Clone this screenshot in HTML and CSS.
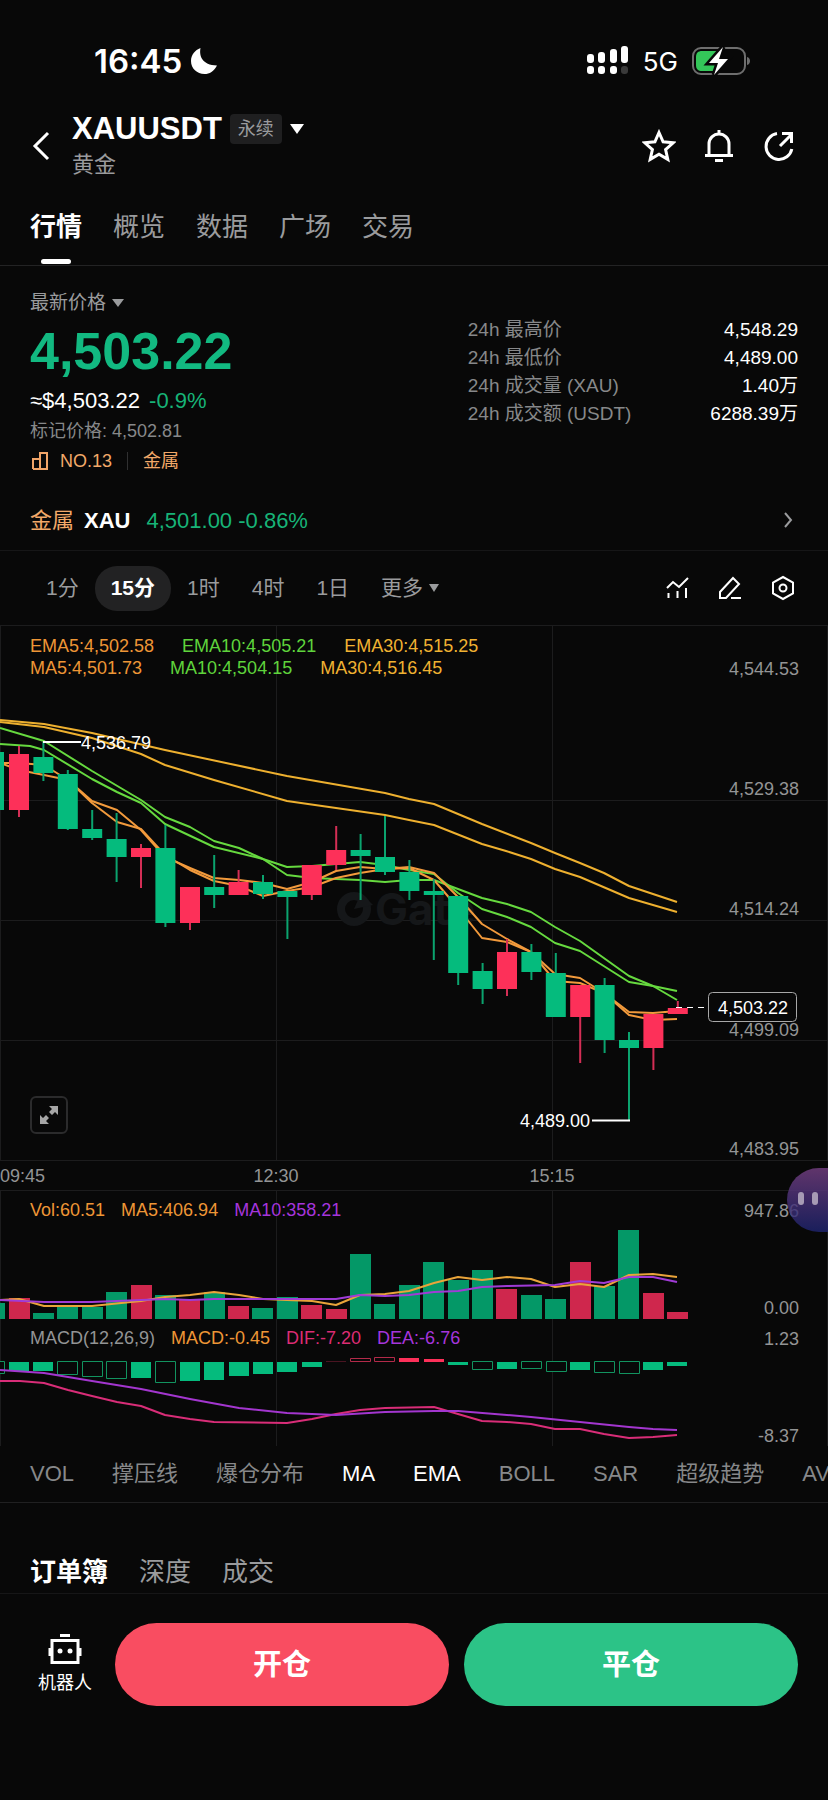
FILE: index.html
```html
<!DOCTYPE html>
<html lang="zh-CN">
<head>
  <meta charset="UTF-8" />
  <meta name="viewport" content="width=device-width, initial-scale=1.0"/>
  <title>XAUUSDT 永续</title>
  <link rel="stylesheet" href="styles.css">
</head>
<body>

  <div class="status-bar">
    <div class="clock">
      <span>16:45</span>
      <svg width="28" height="28" viewBox="0 0 28 28"><path d="M10.500 1C9 9 12 18 27 18.500C24 24.500 19.500 27 14.500 27C7 27 1 21.500 1 14C1 8 5 3 10.500 1Z" fill="#fff"/></svg>
    </div>
    <div class="signals">
      <svg width="42" height="30" viewBox="0 0 42 30" fill="#fff">
        <rect x="0" y="8" width="7" height="9" rx="3"/><rect x="11" y="6" width="7" height="11" rx="3"/>
        <rect x="23" y="3" width="7" height="14" rx="3"/><rect x="34" y="0" width="7" height="17" rx="3"/>
        <rect x="0" y="20" width="7" height="8" rx="3"/><rect x="11" y="20" width="7" height="8" rx="3"/>
        <rect x="23" y="20" width="7" height="8" rx="3"/><rect x="34" y="20" width="7" height="8" rx="3" fill="#3a3a3a"/>
      </svg>
      <span>5G</span>
      <svg width="60" height="30" viewBox="0 0 60 30">
        <rect x="1" y="2" width="52" height="26" rx="8" fill="none" stroke="#6e6e6e" stroke-width="2"/>
        <path d="M55 11v8c4-1 4-7 0-8z" fill="#6e6e6e"/>
        <path d="M10 5h17v20H10c-4 0-6-2-6-6v-8c0-4 2-6 6-6z" fill="#34c759"/>
        <path d="M31 1L17 17h9l-4 12 14-16h-9z" fill="#fff" stroke="#080808" stroke-width="5" paint-order="stroke"/>
      </svg>
    </div>
  </div>

  <header class="header">
    <button class="icon-btn back" aria-label="返回">
      <svg width="22" height="30" viewBox="0 0 22 30"><path d="M18 2L5 15l13 13" class="stroke"/></svg>
    </button>
    <div class="pair">
      <div class="pair-row">
        <h1>XAUUSDT</h1>
        <span class="badge">永续</span>
        <svg width="14" height="10" viewBox="0 0 14 10"><path d="M0 0h14L7 10z" fill="#fff"/></svg>
      </div>
      <div class="pair-sub">黄金</div>
    </div>
    <div class="actions">
      <button class="icon-btn" aria-label="收藏">
        <svg width="34" height="34" viewBox="0 0 34 34"><path d="M17 3.500l4.100 9.300 10.100 1-7.600 6.700 2.200 9.900-8.800-5.100-8.800 5.100 2.200-9.900-7.600-6.700 10.100-1z" class="stroke"/></svg>
      </button>
      <button class="icon-btn" aria-label="提醒">
        <svg width="34" height="34" viewBox="0 0 34 34"><path d="M17 1v4M7 26V15a10 10 0 0 1 20 0v11M3 26.500h28M13 31.500h8" class="stroke"/></svg>
      </button>
      <button class="icon-btn" aria-label="分享">
        <svg width="34" height="34" viewBox="0 0 34 34"><path d="M15 4.600A13 13 0 1 0 29.800 20M18 17L29 6M20 4.500h9.500V14" class="stroke"/></svg>
      </button>
    </div>
  </header>

  <nav class="tabs">
    <a href="#" class="active">行情</a>
    <a href="#">概览</a>
    <a href="#">数据</a>
    <a href="#">广场</a>
    <a href="#">交易</a>
  </nav>

  <section class="summary">
    <div class="quote">
      <button class="price-type">最新价格 <svg width="12" height="8" viewBox="0 0 12 8"><path d="M0 0h12L6 8z" fill="#9a9b9d"/></svg></button>
      <div class="price">4,503.22</div>
      <div class="fiat">≈$4,503.22 <span class="green">-0.9%</span></div>
      <div class="mark">标记价格: 4,502.81</div>
      <div class="tags">
        <svg width="20" height="20" viewBox="0 0 20 20"><path d="M3 18V8h7M10 18V2h7v16H3" fill="none" stroke="#f0a468" stroke-width="2"/></svg>
        <span>NO.13</span><i class="sep"></i><span>金属</span>
      </div>
    </div>
    <dl class="stats">
      <div><dt>24h 最高价</dt><dd>4,548.29</dd></div>
      <div><dt>24h 最低价</dt><dd>4,489.00</dd></div>
      <div><dt>24h 成交量 (XAU)</dt><dd>1.40万</dd></div>
      <div><dt>24h 成交额 (USDT)</dt><dd>6288.39万</dd></div>
    </dl>
  </section>

  <a href="#" class="index-row">
    <span class="orange">金属</span>
    <span class="sym">XAU</span>
    <span class="green">4,501.00 -0.86%</span>
    <svg width="10" height="16" viewBox="0 0 10 16"><path d="M2 1l6 7-6 7" fill="none" stroke="#9a9b9d" stroke-width="2"/></svg>
  </a>

  <div class="toolbar">
    <div class="frames">
      <button>1分</button>
      <button class="active">15分</button>
      <button>1时</button>
      <button>4时</button>
      <button>1日</button>
      <button>更多 <svg width="10" height="8" viewBox="0 0 10 8"><path d="M0 0h10L5 8z" fill="#9a9b9d"/></svg></button>
    </div>
    <div class="tools">
      <button class="icon-btn" aria-label="指标">
        <svg width="24" height="24" viewBox="0 0 24 24"><path d="M2 12l6-6 6 5L23 2M3.500 17v5M12.500 15v7M21 12v10" class="stroke thin"/></svg>
      </button>
      <button class="icon-btn" aria-label="画线">
        <svg width="24" height="24" viewBox="0 0 24 24"><path d="M2 22v-6L15 2l6 6L8 22zM13 22h10" class="stroke thin"/></svg>
      </button>
      <button class="icon-btn" aria-label="设置">
        <svg width="24" height="26" viewBox="0 0 24 26"><path d="M12 2l10 5.500v11L12 24 2 18.500v-11z" class="stroke thin"/><circle cx="12" cy="13" r="3.500" class="stroke thin"/></svg>
      </button>
    </div>
  </div>

  <section class="chart">
    <div class="pane">
      <!-- candles: 24.4 wide slots, 20 wide bodies -->
      <svg viewBox="0 625 828 565">
        <path class="grid" d="M0 625.500H828M0 800.500H828M0 920.500H828M0 1040.500H828M0 1160.500H828M.5 625V1160M276.500 625V1160M552.500 625V1160M827.500 625V1160"/>
        <g class="watermark">
          <circle cx="354" cy="909" r="13"/>
          <path d="M354 909l7-16 12 12z"/>
          <text x="375" y="925">Gate</text>
        </g>
        <g class="line">
          <polyline stroke="#eeb02f" points="0,720 44,724 92,733 165,750 287,776 385,793 409,799 434,804 482,824 531,843 555,853 580,863 604,873 629,886 653,894 677,902"/>
          <polyline stroke="#eeb02f" points="0,722 44,727 92,738 141,754 165,765 214,780 287,801 336,808 385,815 409,820 434,825 482,844 506,851 531,859 555,869 580,877 629,898 677,912"/>
          <polyline stroke="#66d93f" points="0,728 44,741 92,771 141,800 165,817 190,827 214,841 239,848 263,859 287,867 312,866 336,864 360,862 385,865 409,870 434,874 458,893 482,909 507,917 531,927 555,943 580,951 629,982 653,986 677,991"/>
          <polyline stroke="#66d93f" points="0,744 30,746 44,750 92,779 117,792 141,803 165,824 214,847 263,859 287,875 312,878 360,880 385,882 409,880 434,880 482,898 507,904 531,912 555,927 580,941 629,976 653,986 677,1000"/>
          <polyline stroke="#f29a3c" points="0,763 19,763 44,765 68,780 92,801 117,810 141,830 165,857 190,868 214,878 239,880 263,883 287,889 312,882 336,871 360,867 385,869 409,867 434,873 458,897 482,924 507,939 531,952 555,974 580,978 604,993 629,1012 653,1013 677,1011"/>
          <polyline stroke="#f29a3c" points="0,763 19,770 44,775 68,780 92,803 117,822 141,829 165,855 190,870 214,881 239,886 263,896 287,891 312,887 336,878 360,873 385,869 409,868 434,880 458,908 482,938 507,942 531,952 555,981 580,983 604,993 629,1015 653,1020 677,1019"/>
        </g>
        <path class="wick up" d="M19 746V817M141 844V888M190 887V930M238.600 870V895M311.800 865V900M336.200 826V870M507 939V996M580.200 985V1063M653.400 1014V1070M677.800 1001V1014"/>
        <path class="wick down" d="M43.400 742V781M67.800 770V830M92.200 810V840M116.600 813V882M165.400 825V927M214.200 855V908M263 875V899M287.400 891V939M360.600 834V900M385 816V875M409.400 860V900M433.800 879V960M458.200 896V985M482.600 963V1004M531.400 944V980M555.800 953V1017M604.600 978V1053M629 1032V1121"/>
        <path class="up-fill" d="M9 754h20v56h-20zM131 848h20v9h-20zM180 887h20v36h-20zM228.600 882h20v13h-20zM301.800 865h20v30h-20zM326.200 850h20v15h-20zM497 952h20v37h-20zM570.200 985h20v32h-20zM643.400 1014h20v34h-20zM667.800 1008h20v6h-20z"/>
        <path class="down-fill" d="M-16 752h20v58h-20zM33.400 757h20v16h-20zM57.800 774h20v55h-20zM82.200 829h20v9h-20zM106.600 839h20v18h-20zM155.400 848h20v75h-20zM204.200 887h20v8h-20zM253 882h20v12h-20zM277.400 891h20v6h-20zM350.600 850h20v6h-20zM375 857h20v15h-20zM399.400 872h20v19h-20zM423.800 891h20v4h-20zM448.200 896h20v77h-20zM472.600 971h20v18h-20zM521.400 952h20v20h-20zM545.800 973h20v44h-20zM594.600 985h20v55h-20zM619 1040h20v8h-20z"/>
        <path class="marker" d="M43 742H81M592 1120.500H630"/>
        <path class="marker dash" d="M676 1007.500H704"/>
        <text class="mark-text" x="81" y="749">4,536.79</text>
        <text class="mark-text" x="520" y="1127">4,489.00</text>
        <g class="axis" text-anchor="end">
          <text x="799" y="675">4,544.53</text>
          <text x="799" y="795">4,529.38</text>
          <text x="799" y="915">4,514.24</text>
          <text x="799" y="1036">4,499.09</text>
          <text x="799" y="1155">4,483.95</text>
        </g>
        <rect x="708.500" y="992.500" width="88" height="29" rx="4" fill="#080808" stroke="#a8a8a8"/>
        <text class="mark-text" x="753" y="1014" text-anchor="middle">4,503.22</text>
        <g class="axis">
          <text x="0" y="1182">09:45</text>
          <text x="276" y="1182" text-anchor="middle">12:30</text>
          <text x="552" y="1182" text-anchor="middle">15:15</text>
        </g>
      </svg>
      <div class="legend ma">
        <div><span class="c-orange">EMA5:4,502.58</span><span class="c-green">EMA10:4,505.21</span><span class="c-yellow">EMA30:4,515.25</span></div>
        <div><span class="c-orange">MA5:4,501.73</span><span class="c-green">MA10:4,504.15</span><span class="c-yellow">MA30:4,516.45</span></div>
      </div>
      <button class="expand" aria-label="全屏">
        <svg width="18" height="18" viewBox="0 0 18 18" fill="#a6a6a6"><path d="M9 0h9v9l-3-3-3 3-3-3 3-3zM0 9l3 3 3-3 3 3-3 3 3 3H0z"/></svg>
      </button>
    </div>

    <div class="pane">
      <svg viewBox="0 1190 828 130">
        <path class="grid" d="M0 1190.500H828M.5 1190V1320M276.500 1190V1320M552.500 1190V1320M827.500 1190V1320"/>
        <path fill="#cf274d" d="M9 1298h21v21h-21zM131 1285h21v34h-21zM179 1299h21v20h-21zM228 1306h21v13h-21zM301 1305h21v14h-21zM326 1309h21v10h-21zM496 1289h21v30h-21zM570 1262h21v57h-21zM643 1293h21v26h-21zM667 1312h21v7h-21z"/>
        <path fill="#049867" d="M-16 1303h21v16h-21zM33 1313h21v6h-21zM57 1307h21v12h-21zM82 1307h21v12h-21zM106 1292h21v27h-21zM155 1295h21v24h-21zM204 1292h21v27h-21zM252 1308h21v11h-21zM277 1297h21v22h-21zM350 1254h21v65h-21zM374 1304h21v15h-21zM399 1285h21v34h-21zM423 1262h21v57h-21zM448 1280h21v39h-21zM472 1270h21v49h-21zM521 1295h21v24h-21zM545 1299h21v20h-21zM594 1286h21v33h-21zM618 1230h21v89h-21z"/>
        <g class="line">
          <polyline stroke="#e9a43a" points="0,1300 19,1299 44,1306 92,1306 141,1301 165,1297 190,1295 214,1292 239,1295 263,1299 287,1300 312,1301 336,1305 360,1295 385,1294 409,1291 434,1283 458,1277 482,1280 507,1277 531,1279 555,1287 580,1284 604,1287 629,1275 653,1274 677,1277"/>
          <polyline stroke="#a03bd6" points="0,1300 44,1302 92,1302 141,1300 165,1299 190,1300 214,1299 263,1299 336,1299 360,1295 385,1296 409,1295 434,1292 458,1291 482,1287 507,1286 555,1285 580,1281 604,1283 629,1277 653,1277 677,1282"/>
        </g>
        <g class="axis" text-anchor="end">
          <text x="799" y="1217">947.86</text>
          <text x="799" y="1314">0.00</text>
        </g>
      </svg>
      <div class="legend vol"><span class="c-orange">Vol:60.51</span><span class="c-orange">MA5:406.94</span><span class="c-purple">MA10:358.21</span></div>
      <button class="assistant" aria-label="助手"><i></i><i></i></button>
    </div>

    <div class="pane">
      <svg viewBox="0 1320 828 126">
        <path class="grid" d="M.5 1320V1446M276.500 1320V1446M552.500 1320V1446M827.500 1320V1446"/>
        <path class="down-fill" d="M9 1362h20v9h-20zM33 1362h20v9h-20zM131 1362h20v16h-20zM180 1362h20v19h-20zM204 1362h20v18h-20zM229 1362h20v14h-20zM253 1362h20v12h-20zM277 1362h20v10h-20zM302 1362h20v5h-20zM448 1362h20v3h-20zM497 1362h20v7h-20zM570 1362h20v8h-20zM643 1362h20v8h-20zM667 1362h20v4h-20z"/>
        <path class="hollow" stroke="#12935f" d="M-15.500 1361.500h20v12h-20zM57.500 1361.500h20v13h-20zM82.500 1361.500h20v15h-20zM106.500 1361.500h20v17h-20zM155.500 1361.500h20v21h-20zM472.500 1361.500h20v8h-20zM521.500 1361.500h20v7h-20zM546.500 1361.500h20v10h-20zM594.500 1361.500h20v11h-20zM619.500 1361.500h20v12h-20z"/>
        <path class="up-fill" d="M399 1358h20v4h-20zM424 1359h20v3h-20z"/>
        <path class="hollow" stroke="#b32a49" d="M350.500 1358.500h20v3h-20zM374.500 1357.500h20v4h-20z"/>
        <path class="hollow" stroke="#4a1421" d="M326 1361.500h20"/>
        <g class="line">
          <polyline stroke="#d92d78" points="0,1381 20,1381 44,1383 68,1390 92,1396 117,1402 141,1406 165,1415 190,1419 214,1422 287,1423 312,1419 336,1414 360,1410 385,1408 434,1407 458,1414 482,1421 507,1422 531,1424 555,1429 580,1429 604,1434 629,1438 653,1437 677,1435"/>
          <polyline stroke="#a336cf" points="0,1370 44,1373 92,1381 141,1389 190,1399 239,1408 287,1413 312,1414 336,1415 385,1412 434,1411 458,1411 531,1417 580,1422 629,1427 653,1429 677,1430"/>
        </g>
        <g class="axis" text-anchor="end">
          <text x="799" y="1345">1.23</text>
          <text x="799" y="1442">-8.37</text>
        </g>
      </svg>
      <div class="legend macd"><span>MACD(12,26,9)</span><span class="c-orange">MACD:-0.45</span><span class="c-pink">DIF:-7.20</span><span class="c-purple">DEA:-6.76</span></div>
    </div>
  </section>

  <div class="indicators">
    <button>VOL</button>
    <button>撑压线</button>
    <button>爆仓分布</button>
    <button class="active">MA</button>
    <button class="active">EMA</button>
    <button>BOLL</button>
    <button>SAR</button>
    <button>超级趋势</button>
    <button>AVL</button>
  </div>

  <nav class="tabs book">
    <a href="#" class="active">订单簿</a>
    <a href="#">深度</a>
    <a href="#">成交</a>
  </nav>

  <footer class="footer">
    <a href="#" class="robot">
      <svg width="34" height="32" viewBox="0 0 34 32">
        <path d="M4 7.500h26v22H4zM12 2.500h10M2 15v8M32 15v8" class="stroke"/>
        <circle cx="12" cy="18" r="2.500" fill="#fff"/><circle cx="22" cy="18" r="2.500" fill="#fff"/>
      </svg>
      机器人
    </a>
    <button class="trade open">开仓</button>
    <button class="trade close">平仓</button>
  </footer>

</body>
</html>
```
FILE: styles.css
```css
* {
  box-sizing: border-box;
}

body {
  margin: 0;
  min-height: 100vh;
  background: #080808;
  color: #fff;
  font-family: "Liberation Sans", "Noto Sans CJK SC", sans-serif;
  font-size: 22px;
  overflow-x: hidden;
}

button {
  background: none;
  border: none;
  padding: 0;
  margin: 0;
  color: inherit;
  font: inherit;
  cursor: pointer;
}

a {
  color: inherit;
  text-decoration: none;
}

svg {
  display: block;
}

.stroke {
  fill: none;
  stroke: #fff;
  stroke-width: 3;
}

.stroke.thin {
  stroke-width: 2;
}

.green {
  color: #17b377;
}

.orange {
  color: #f2a869;
}

/* status bar */
.status-bar {
  height: 106px;
  padding: 16px 76px 0 94px;
  display: flex;
  justify-content: space-between;
  align-items: center;
  font-family: Inter, sans-serif;
}

.clock,
.signals {
  display: flex;
  align-items: center;
}

.clock {
  gap: 8px;
  font-size: 33px;
  font-weight: 600;
}

.signals {
  gap: 14px;
  font-size: 26px;
}

/* header */
.header {
  display: flex;
  align-items: center;
  height: 80px;
  padding: 0 32px 0 30px;
}

.back {
  width: 42px;
}

.pair {
  flex: 1;
}

.pair-row {
  display: flex;
  align-items: center;
  gap: 8px;
  height: 38px;
}

h1 {
  margin: 0;
  font-size: 31px;
  line-height: 38px;
}

.badge {
  padding: 0 8px;
  border-radius: 4px;
  background: #1f1f20;
  color: #9a9b9d;
  font-size: 18px;
  line-height: 30px;
}

.pair-sub {
  color: #9a9b9d;
  line-height: 34px;
}

.actions {
  display: flex;
  gap: 26px;
}

/* tabs */
.tabs {
  display: flex;
  gap: 31px;
  padding: 25px 30px 0;
  border-bottom: 1px solid #232324;
  color: #9a9b9d;
  font-size: 26px;
  line-height: 32px;
}

.tabs a {
  display: flex;
  flex-direction: column;
  align-items: center;
  gap: 16px;
  padding-bottom: 22px;
}

.tabs .active {
  color: #fff;
  font-weight: 600;
  padding-bottom: 1px;
}

.tabs .active::after {
  content: "";
  width: 30px;
  height: 5px;
  border-radius: 3px;
  background: #fff;
}

.tabs.book {
  padding-top: 53px;
  border-color: #161617;
}

.tabs.book a {
  padding-bottom: 5px;
}

.tabs.book .active::after {
  display: none;
}

/* price summary */
.summary {
  display: flex;
  justify-content: space-between;
  align-items: flex-start;
  padding: 23px 30px 0;
  font-size: 19px;
  line-height: 28px;
}

.price-type {
  display: flex;
  align-items: center;
  gap: 6px;
  color: #9a9b9d;
}

.price {
  color: #12b981;
  font-size: 52px;
  font-weight: 700;
  line-height: 68px;
}

.fiat {
  font-size: 22px;
  line-height: 32px;
}

.fiat .green {
  margin-left: 3px;
}

.mark {
  color: #87888a;
  font-size: 18px;
}

.tags {
  display: flex;
  align-items: center;
  gap: 10px;
  color: #f2a869;
  font-size: 18px;
  line-height: 32px;
}

.sep {
  width: 1px;
  height: 18px;
  margin: 0 5px;
  background: #303031;
}

.stats {
  width: 43%;
  margin: 27px 0 0;
}

.stats div {
  display: flex;
  justify-content: space-between;
}

dt {
  color: #87888a;
}

dd {
  margin: 0;
}

.index-row {
  display: flex;
  align-items: baseline;
  gap: 10px;
  height: 74px;
  padding: 28px 35px 0 30px;
  border-bottom: 1px solid #161617;
  line-height: 32px;
}

.index-row .sym {
  margin-right: 6px;
  font-weight: 600;
}

.index-row svg {
  margin-left: auto;
}

/* timeframe toolbar */
.toolbar {
  display: flex;
  align-items: center;
  justify-content: space-between;
  height: 74px;
  padding: 0 33px 0 30px;
}

.frames,
.tools {
  display: flex;
  align-items: center;
}

.frames button {
  display: flex;
  align-items: center;
  gap: 6px;
  height: 45px;
  padding: 0 16px;
  border-radius: 22px;
  color: #9a9b9d;
  font-size: 21px;
  line-height: 44px;
}

.frames .active {
  background: #222223;
  color: #fff;
  font-weight: 600;
}

.tools {
  gap: 29px;
}

/* chart */
.pane {
  position: relative;
}

.pane > svg {
  width: 100%;
  height: auto;
}

.grid {
  fill: none;
  stroke: #1c1c1d;
}

.line {
  fill: none;
  stroke-width: 2;
  stroke-linejoin: round;
}

.wick {
  fill: none;
  stroke-width: 2;
}

.up {
  stroke: #d42e55;
}

.down {
  stroke: #0ba36e;
}

.up-fill {
  fill: #fd3059;
}

.down-fill {
  fill: #05bb7d;
}

.hollow {
  fill: #080808;
}

.marker {
  fill: none;
  stroke: #fff;
  stroke-width: 2;
}

.marker.dash {
  stroke-width: 1;
  stroke-dasharray: 6 5;
}

.mark-text,
.axis {
  font-size: 18px;
  fill: #fff;
}

.axis {
  fill: #939495;
}

.watermark {
  fill: #151719;
  font: 700 44px Inter, sans-serif;
}

.watermark circle {
  fill: none;
  stroke: #151719;
  stroke-width: 8;
}

.legend {
  position: absolute;
  left: 30px;
  display: flex;
  gap: 16px;
  color: #939495;
  font-size: 18px;
  line-height: 22px;
}

.legend.ma {
  top: 10px;
  flex-direction: column;
  gap: 0;
}

.legend.ma div {
  display: flex;
  gap: 28px;
}

.legend.vol {
  top: 9px;
}

.legend.macd {
  top: 7px;
}

.c-orange {
  color: #ee9636;
}

.c-green {
  color: #5fd43c;
}

.c-yellow {
  color: #f0b232;
}

.c-purple {
  color: #a535dc;
}

.c-pink {
  color: #dc2c74;
}

.expand {
  position: absolute;
  left: 30px;
  bottom: 56px;
  width: 38px;
  height: 38px;
  display: flex;
  align-items: center;
  justify-content: center;
  border: 2px solid #2b2b2c;
  border-radius: 6px;
}

.assistant {
  position: absolute;
  top: -22px;
  right: 0;
  width: 41px;
  height: 64px;
  display: flex;
  gap: 8px;
  padding: 24px 0 0 11px;
  border-radius: 32px 0 0 32px;
  background: linear-gradient(rgba(118, 64, 132, 0.8), rgba(30, 36, 112, 0.8));
}

.assistant i {
  width: 6px;
  height: 13px;
  border-radius: 3px;
  background: #a79bb4;
}

/* indicator strip */
.indicators {
  display: flex;
  align-items: baseline;
  gap: 38px;
  height: 57px;
  padding: 12px 0 0 30px;
  overflow: hidden;
  border-bottom: 1px solid #202021;
  color: #87888a;
  line-height: 32px;
}

.indicators button {
  flex: none;
}

.indicators .active {
  color: #fff;
}

/* bottom bar */
.footer {
  display: flex;
  align-items: center;
  gap: 15px;
  padding: 29px 30px 94px;
}

.robot {
  display: flex;
  flex-direction: column;
  align-items: center;
  gap: 4px;
  width: 70px;
  font-size: 18px;
  line-height: 28px;
}

.trade {
  flex: 1;
  height: 83px;
  border-radius: 42px;
  font-size: 29px;
  font-weight: 700;
  line-height: 40px;
}

.open {
  background: #f94d61;
}

.close {
  background: #2cc387;
}
```
